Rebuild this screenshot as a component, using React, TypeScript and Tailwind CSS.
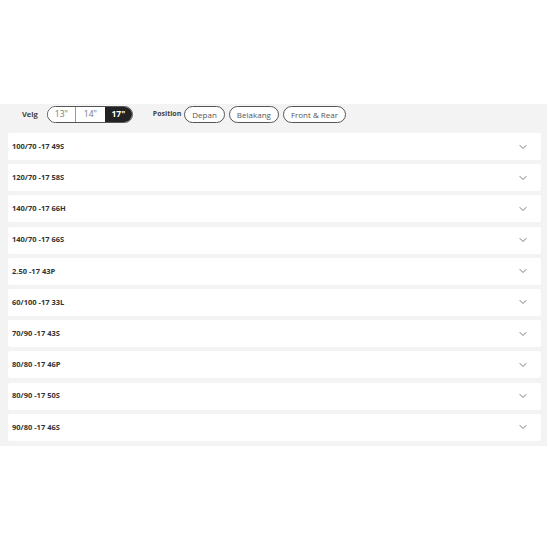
import { ChevronDown } from "lucide-react";

const SIZES = [
  "100/70 -17 49S",
  "120/70 -17 58S",
  "140/70 -17 66H",
  "140/70 -17 66S",
  "2.50 -17 43P",
  "60/100 -17 33L",
  "70/90 -17 43S",
  "80/80 -17 46P",
  "80/90 -17 50S",
  "90/80 -17 46S",
];

const RIMS = ['13"', '14"', '17"'];
const POSITIONS = ["Depan", "Belakang", "Front & Rear"];

export default function App() {
  return (
    <div className="w-[550px] h-[550px] bg-white font-['Open_Sans',sans-serif]">
      <div className="h-[104px]" />
      <div className="w-[547px] bg-[#f3f3f3] pb-[5px]">
        <div className="flex items-center pt-[2px] pb-[10px] pl-[22px]">
          <span className="text-[7.5px] font-bold text-[#444] mr-[9px]">Velg</span>
          <div className="flex h-[17px] rounded-full border border-[#555] overflow-hidden">
            {RIMS.map((r, i) => (
              <div
                key={r}
                className={
                  i === 2
                    ? "w-[27px] flex items-center justify-center bg-[#222] text-white text-[8.5px] font-bold"
                    : i === 0
                      ? "w-[28px] flex items-center justify-center bg-white text-[#777] text-[8.5px] border-r border-[#999]"
                      : "w-[29px] flex items-center justify-center bg-white text-[#777] text-[8.5px]"
                }
              >
                {r}
              </div>
            ))}
          </div>
          <span className="text-[7px] font-bold text-[#444] ml-[20px] mr-[3px]">Position</span>
          <div className="flex gap-[4px]">
            {POSITIONS.map((p) => (
              <div
                key={p}
                className="h-[17px] px-[7px] flex items-center rounded-full border border-[#555] bg-white text-[8px] text-[#555]"
              >
                {p}
              </div>
            ))}
          </div>
        </div>
        <div className="flex flex-col gap-[4.2px] pl-[8px] pr-[6px]">
          {SIZES.map((s) => (
            <div
              key={s}
              className="h-[27px] bg-white rounded-[2px] flex items-center justify-between pl-[4px] pr-[12px]"
            >
              <span className="text-[7.5px] font-bold text-[#333]">{s}</span>
              <ChevronDown size={12} strokeWidth={1.75} className="text-[#666]" />
            </div>
          ))}
        </div>
      </div>
    </div>
  );
}
